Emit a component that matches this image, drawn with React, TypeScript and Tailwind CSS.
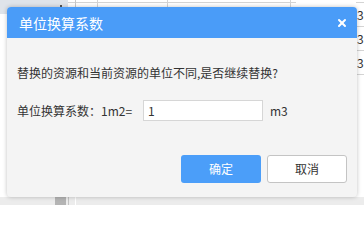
import { X } from "lucide-react";

export default function App() {
  return (
    <div
      className="relative h-[205px] w-[364px] overflow-hidden bg-white text-[12px] text-[#333]"
      style={{ fontFamily: '"Noto Sans CJK SC", "Liberation Sans", sans-serif' }}
    >
      {/* page behind the modal */}
      <div className="absolute inset-x-0 top-0 h-[14px]">
        <div className="absolute left-0 top-0 h-[14px] w-[68px] bg-[#dfe4ea]" />
        <div className="absolute left-[60px] top-[5px] h-[3px] w-[2px] bg-[#555]" />
        <div className="absolute inset-x-[68px] top-[2px] h-px bg-[#d4d4d4]" />
        <div className="absolute left-[75px] top-0 h-[14px] w-px bg-[#c8c8c8]" />
        <div className="absolute left-[97px] top-0 h-[14px] w-px bg-[#d4d4d4]" />
        <div className="absolute left-[167px] top-0 h-[14px] w-px bg-[#d4d4d4]" />
        <div className="absolute left-[290px] top-0 h-[14px] w-px bg-[#d4d4d4]" />
      </div>
      <div className="absolute right-0 top-[2px] flex w-[8px] flex-col text-[12px] leading-[23px]">
        <div className="h-px bg-[#d4d4d4]" />
        <div className="border-b border-[#d4d4d4] pl-[1px]">3</div>
        <div className="border-b border-[#d4d4d4] pl-[1px]">3</div>
        <div className="border-b border-[#d4d4d4] pl-[1px]">3</div>
      </div>
      <div className="absolute inset-x-0 bottom-0 h-[8px] bg-[#ececec]">
        <div className="absolute left-[55px] top-0 h-[8px] w-[11px] bg-[#b4b4b4]" />
        <div className="absolute left-[68px] top-0 h-[8px] w-px bg-[#c4c4c4]" />
        <div className="absolute left-[75px] top-0 h-[8px] w-px bg-white" />
      </div>

      {/* modal */}
      <div className="absolute left-[7px] top-[7px] flex h-[190px] w-[350px] flex-col overflow-hidden rounded-[4px] bg-[#f4f4f4] shadow-[0_0_4px_rgba(0,0,0,0.25)]">
        <div className="flex h-[31px] items-center justify-between bg-[#4a9cf8] pl-[12px] pr-[9px] text-white">
          <span className="text-[14px] leading-none">单位换算系数</span>
          <X className="h-[12px] w-[12px]" strokeWidth={4} />
        </div>
        <div className="flex flex-1 flex-col px-[10px] pb-[14px] pt-[26px]">
          <p className="leading-[17px]">替换的资源和当前资源的单位不同,是否继续替换?</p>
          <div className="mt-[19px] flex items-center">
            <span className="w-[126px]">单位换算系数：1m2=</span>
            <input
              defaultValue="1"
              className="h-[21px] w-[120px] border border-[#d6d6d6] bg-white px-[4px] text-[12px] text-[#333] outline-none"
            />
            <span className="ml-[7px]">m3</span>
          </div>
          <div className="mt-auto flex justify-end gap-[6px]">
            <button className="h-[28px] w-[80px] rounded-[3px] bg-[#4b9ef9] text-white">确定</button>
            <button className="h-[28px] w-[80px] rounded-[3px] border border-[#c4c4c4] bg-white text-[#333]">
              取消
            </button>
          </div>
        </div>
      </div>
    </div>
  );
}
